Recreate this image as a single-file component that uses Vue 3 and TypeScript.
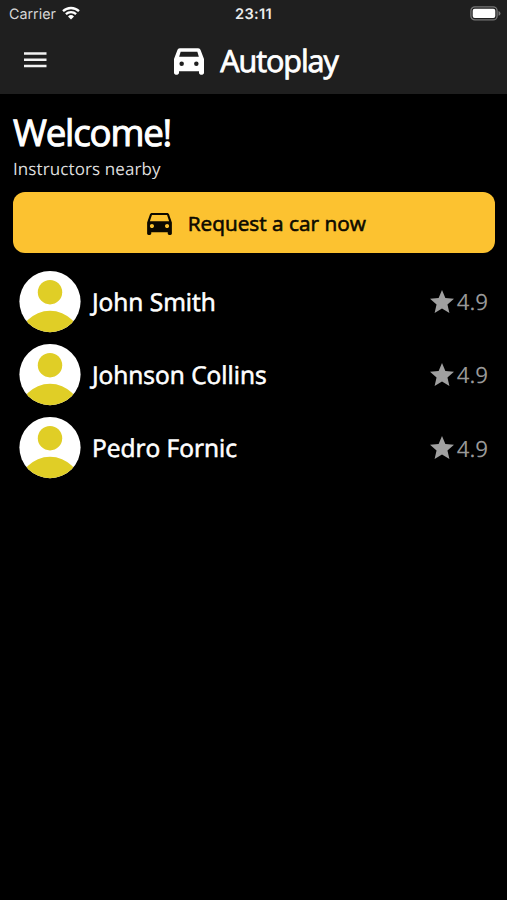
<script setup lang="ts">
interface Instructor {
  id: number
  name: string
  rating: string
}

const carPath =
  'M18.92 6.01C18.72 5.42 18.16 5 17.5 5h-11c-.66 0-1.21.42-1.42 1.01L3 12v8c0 .55.45 1 1 1h1c.55 0 1-.45 1-1v-1h12v1c0 .55.45 1 1 1h1c.55 0 1-.45 1-1v-8l-2.08-5.99zM6.5 16c-.83 0-1.5-.67-1.5-1.5S5.67 13 6.5 13s1.5.67 1.5 1.5S7.33 16 6.5 16zm11 0c-.83 0-1.5-.67-1.5-1.5s.67-1.5 1.5-1.5 1.5.67 1.5 1.5-.67 1.5-1.5 1.5zM5 11l1.5-4.5h11L19 11H5z'

// Heavier car used next to the brand name
const brandCarPath =
  'M19 6.1C18.8 5.4 18.2 4.9 17.5 4.9H6.5c-.7 0-1.3.5-1.5 1.2L3 11.4v8.3c0 .6.5 1.1 1.1 1.1h.8c.6 0 1.1-.5 1.1-1.1v-.9h12v.9c0 .6.5 1.1 1.1 1.1h.8c.6 0 1.1-.5 1.1-1.1v-8.3zM7.6 15.6a1.35 1.35 0 1 1 0-2.7 1.35 1.35 0 0 1 0 2.7zm8.8 0a1.35 1.35 0 1 1 0-2.7 1.35 1.35 0 0 1 0 2.7zM6.1 10.1l.9-3h10l.9 3z'

const instructors: Instructor[] = [
  { id: 1, name: 'John Smith', rating: '4.9' },
  { id: 2, name: 'Johnson Collins', rating: '4.9' },
  { id: 3, name: 'Pedro Fornic', rating: '4.9' },
]
</script>

<template>
  <div class="screen">
    <header class="header">
      <div class="status">
        <div class="carrier">
          <span class="carrier-name">Carrier</span>
          <svg class="wifi" viewBox="0 0 18 14">
            <path d="M1 5.2A11.6 11.6 0 0 1 17 5.2" />
            <path d="M3.9 8.1A7.4 7.4 0 0 1 14.1 8.1" />
            <path class="dot" d="M9 13.4 6 10.4A4.4 4.4 0 0 1 12 10.4Z" />
          </svg>
        </div>
        <time class="clock">23:11</time>
        <svg class="battery" viewBox="0 0 31 15">
          <rect class="case" x=".9" y=".9" width="26.2" height="13" rx="4" />
          <rect class="charge" x="2.7" y="2.7" width="22.6" height="9.4" rx="2" />
          <path class="tip" d="M28.5 5q2 .8 2 2.4t-2 2.4z" />
        </svg>
      </div>
      <div class="toolbar">
        <button class="menu" aria-label="Menu">
          <svg class="menu-icon" viewBox="0 0 23 16">
            <path d="M0 1.5h22.5M0 7.8h22.5M0 13.9h22.5" />
          </svg>
        </button>
        <div class="brand">
          <svg class="brand-icon" viewBox="0 0 24 24"><path :d="brandCarPath" /></svg>
          <span class="brand-name">Autoplay</span>
        </div>
      </div>
    </header>

    <main class="content">
      <h1 class="title">Welcome!</h1>
      <p class="subtitle">Instructors nearby</p>
      <button class="request">
        <svg class="request-icon" viewBox="0 0 24 24"><path :d="carPath" /></svg>
        <span class="request-label">Request a car now</span>
      </button>
      <ul class="list">
        <li v-for="person in instructors" :key="person.id" class="row">
          <svg class="avatar" viewBox="0 0 62 62">
            <defs>
              <clipPath :id="`avatar-${person.id}`"><circle cx="31" cy="30.6" r="30.6" /></clipPath>
            </defs>
            <g :clip-path="`url(#avatar-${person.id})`">
              <rect width="62" height="62" fill="#fff" />
              <circle cx="31" cy="21.2" r="12.2" fill="#e0ce26" />
              <circle cx="31" cy="71.3" r="31.5" fill="#e0ce26" />
            </g>
          </svg>
          <span class="name">{{ person.name }}</span>
          <span class="rating">
            <svg class="star" viewBox="2 2 20 19">
              <path d="M12 17.27 18.18 21l-1.64-7.03L22 9.24l-7.19-.61L12 2 9.19 8.63 2 9.24l5.46 4.73L5.82 21z" />
            </svg>
            <span class="score">{{ person.rating }}</span>
          </span>
        </li>
      </ul>
    </main>
  </div>
</template>

<style>
body {
  background: #000;
}
</style>

<style scoped>
.screen {
  box-sizing: border-box;
  height: 900px;
  overflow: hidden;
  background: #000;
  color: #fff;
  font-family: 'Open Sans', 'Noto Sans', sans-serif;
  white-space: nowrap;
  text-rendering: geometricPrecision;
}

.header {
  height: 93.5px;
  background: #1f1f1f;
}

.status {
  display: grid;
  grid-template-columns: 1fr auto 1fr;
  align-items: center;
  height: 27px;
  padding: 0 6px 0 9px;
  font-family: Inter, 'Liberation Sans', sans-serif;
  font-size: 14.3px;
  color: #d6d6d6;
}

.carrier {
  display: flex;
  align-items: center;
  gap: 6px;
}

.carrier-name {
  padding-top: 2px;
}

.wifi {
  width: 18px;
  height: 14px;
  margin-top: -1px;
  fill: none;
  stroke: #fff;
  stroke-width: 2.3;
}

.wifi .dot {
  fill: #fff;
  stroke: none;
}

.clock {
  margin-right: 3px;
  font-size: 14.6px;
  font-weight: 600;
  letter-spacing: 0.3px;
  color: #eee;
}

.battery {
  justify-self: end;
  width: 31px;
  height: 15px;
}

.case {
  fill: none;
  stroke: #777;
  stroke-width: 1.3;
}

.charge {
  fill: #fff;
}

.tip {
  fill: #777;
}

.toolbar {
  display: grid;
  grid-template-columns: 1fr auto 1fr;
  align-items: center;
  height: 66px;
  padding: 0 24px;
}

.menu {
  display: flex;
  width: 23px;
  padding: 0;
  border: 0;
  background: none;
}

.menu-icon {
  width: 23px;
  height: 16px;
  stroke: #f2f2f2;
  stroke-width: 2.5;
}

.brand {
  display: flex;
  align-items: center;
  gap: 11px;
}

.brand-icon {
  width: 40px;
  height: 40px;
  margin-top: -1px;
  fill: #fff;
}

.brand-name {
  font-size: 30.6px;
  line-height: 40px;
  letter-spacing: -1.1px;
  -webkit-text-stroke: 0.8px #fff;
}

.content {
  padding: 16px 12px 0 13px;
}

.title {
  margin: 0;
  font-size: 36.7px;
  font-weight: 400;
  line-height: 44px;
  letter-spacing: -1.2px;
  -webkit-text-stroke: 1px #fff;
}

.subtitle {
  margin: 3px 0 0;
  font-size: 17px;
  line-height: 24px;
  letter-spacing: 0.1px;
  color: #dedede;
}

.request {
  display: flex;
  align-items: center;
  justify-content: center;
  gap: 12px;
  width: 481.5px;
  height: 61px;
  margin-top: 11px;
  padding: 0 0 0 1px;
  border: 0;
  border-radius: 12px;
  background: #fcc230;
  color: #0c0900;
  font-family: inherit;
}

.request-icon {
  width: 33px;
  height: 33px;
  fill: #0c0900;
}

.request-label {
  margin-top: 1px;
  font-size: 20.8px;
  -webkit-text-stroke: 0.6px #0c0900;
}

.list {
  display: flex;
  flex-direction: column;
  gap: 11.3px;
  margin: 18.2px 0 0;
  padding: 0 7px 0 6px;
  list-style: none;
}

.row {
  display: flex;
  align-items: center;
}

.avatar {
  width: 62px;
  height: 62px;
}

.name {
  flex: 1;
  padding: 1px 0 0 11px;
  font-size: 24.5px;
  line-height: 35px;
  -webkit-text-stroke: 0.6px #fff;
}

.rating {
  display: flex;
  align-items: center;
  gap: 3px;
  color: #999;
}

.star {
  width: 24px;
  height: 23px;
  margin-top: -1px;
  fill: #a0a0a0;
}

.score {
  font-size: 22.3px;
}
</style>
